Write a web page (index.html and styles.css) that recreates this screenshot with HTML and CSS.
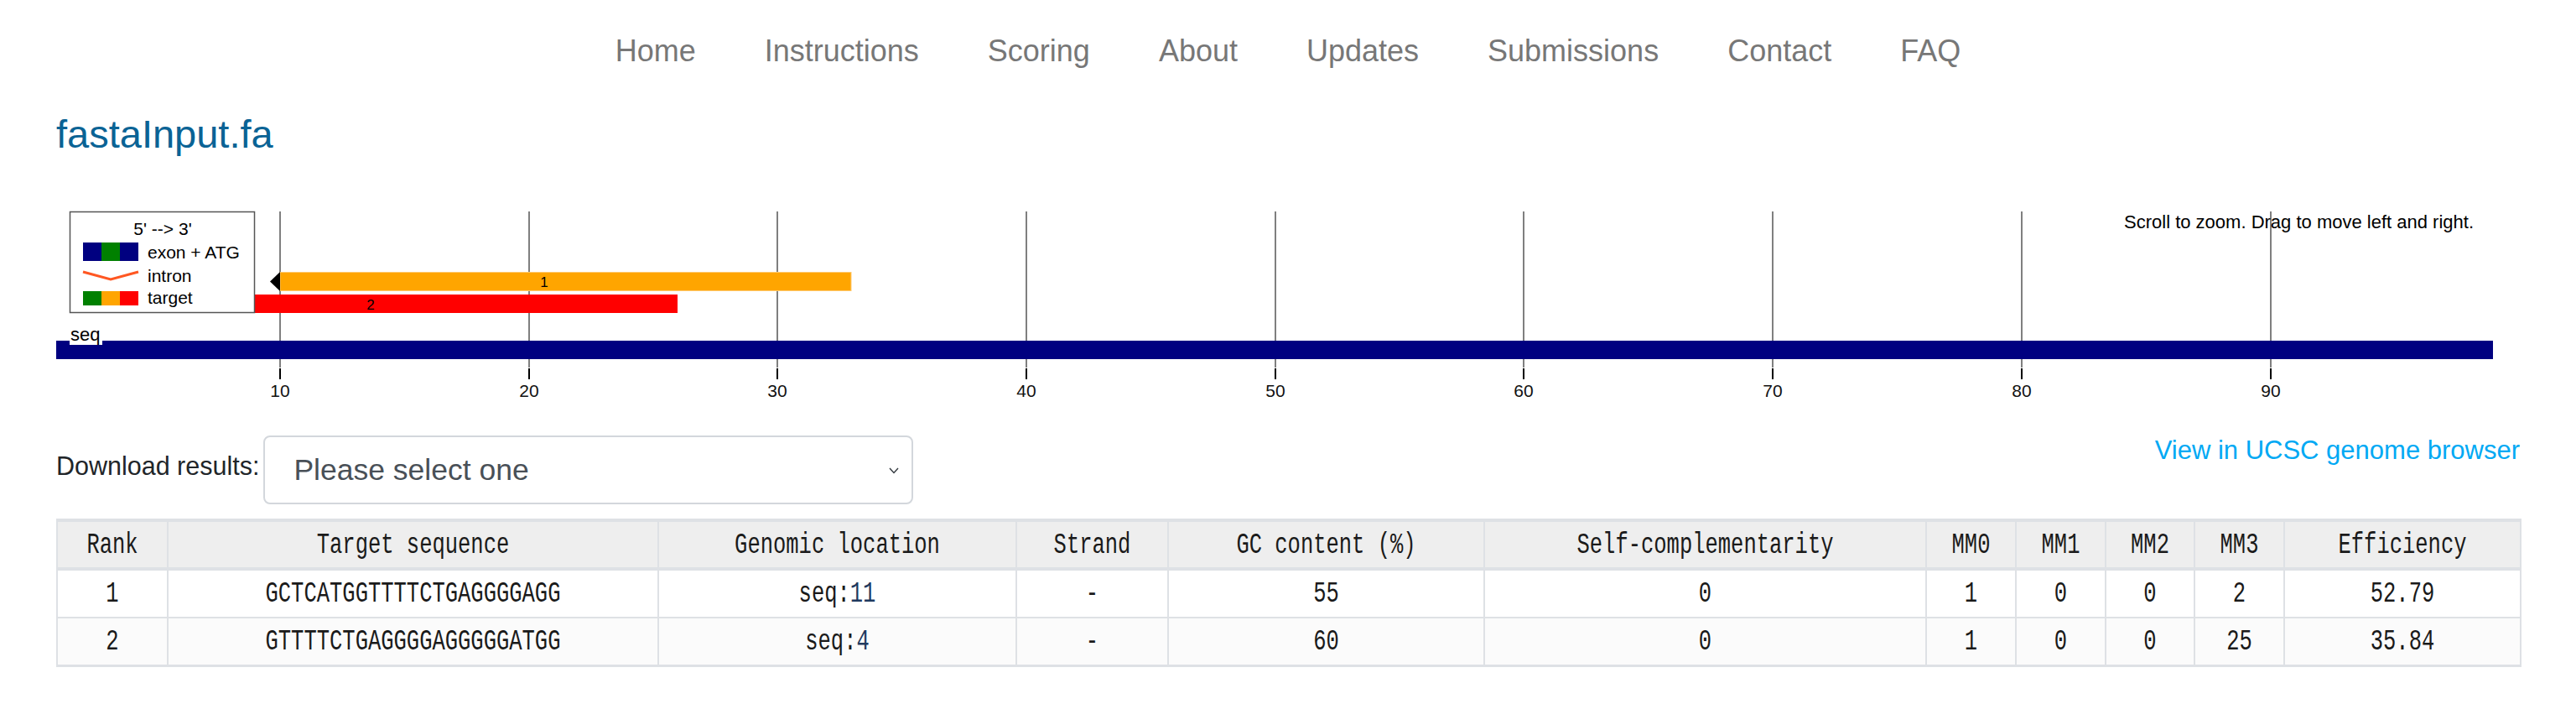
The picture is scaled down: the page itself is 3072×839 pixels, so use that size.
FILE: index.html
```html
<!DOCTYPE html>
<html lang="en">
<head>
<meta charset="utf-8">
<title>fastaInput.fa</title>
<link rel="stylesheet" href="styles.css">
</head>
<body>
<nav class="topnav">
  <ul class="nav-list">
    <li><a href="#">Home</a></li>
    <li><a href="#">Instructions</a></li>
    <li><a href="#">Scoring</a></li>
    <li><a href="#">About</a></li>
    <li><a href="#">Updates</a></li>
    <li><a href="#">Submissions</a></li>
    <li><a href="#">Contact</a></li>
    <li><a href="#">FAQ</a></li>
  </ul>
</nav>
<main class="page">
  <h1 class="file-title">fastaInput.fa</h1>

  <div class="chart">
    <svg class="chart-svg" width="2938" height="240" viewBox="67 240 2938 240" xmlns="http://www.w3.org/2000/svg">
      <g stroke="#7f7f7f" stroke-width="2">
        <line x1="334" y1="252" x2="334" y2="438"/>
        <line x1="631" y1="252" x2="631" y2="438"/>
        <line x1="927" y1="252" x2="927" y2="438"/>
        <line x1="1224" y1="252" x2="1224" y2="438"/>
        <line x1="1521" y1="252" x2="1521" y2="438"/>
        <line x1="1817" y1="252" x2="1817" y2="438"/>
        <line x1="2114" y1="252" x2="2114" y2="438"/>
        <line x1="2411" y1="252" x2="2411" y2="438"/>
        <line x1="2708" y1="252" x2="2708" y2="438"/>
      </g>
      <g stroke="#000" stroke-width="2">
        <line x1="334" y1="439" x2="334" y2="452"/>
        <line x1="631" y1="439" x2="631" y2="452"/>
        <line x1="927" y1="439" x2="927" y2="452"/>
        <line x1="1224" y1="439" x2="1224" y2="452"/>
        <line x1="1521" y1="439" x2="1521" y2="452"/>
        <line x1="1817" y1="439" x2="1817" y2="452"/>
        <line x1="2114" y1="439" x2="2114" y2="452"/>
        <line x1="2411" y1="439" x2="2411" y2="452"/>
        <line x1="2708" y1="439" x2="2708" y2="452"/>
      </g>
      <g class="axis-labels" text-anchor="middle">
        <text x="334" y="473">10</text>
        <text x="631" y="473">20</text>
        <text x="927" y="473">30</text>
        <text x="1224" y="473">40</text>
        <text x="1521" y="473">50</text>
        <text x="1817" y="473">60</text>
        <text x="2114" y="473">70</text>
        <text x="2411" y="473">80</text>
        <text x="2708" y="473">90</text>
      </g>
      <text class="hint" x="2950" y="272" text-anchor="end">Scroll to zoom. Drag to move left and right.</text>

      <rect x="334" y="324.5" width="681" height="22" fill="#ffa500" stroke="#ffc970" stroke-width="1"/>
      <polygon points="334,324 322,335.5 334,347" fill="#000"/>
      <text class="bar-label" x="649" y="342" text-anchor="middle">1</text>

      <rect x="126" y="351" width="682" height="22" fill="#ff0000"/>
      <text class="bar-label" x="442" y="369" text-anchor="middle">2</text>

      <rect x="67" y="406" width="2906" height="22" fill="#000080"/>
      <rect x="83" y="391" width="39" height="20" fill="#ffffff"/>
      <text class="seq-label" x="84" y="406">seq</text>

      <rect x="83.5" y="252.5" width="220" height="120" fill="#ffffff" stroke="#555" stroke-width="1.5"/>
      <text class="legend-text" x="194" y="280" text-anchor="middle">5' --&gt; 3'</text>
      <rect x="99" y="289" width="22" height="22" fill="#000080"/>
      <rect x="121" y="289" width="22" height="22" fill="#008000"/>
      <rect x="143" y="289" width="22" height="22" fill="#000080"/>
      <text class="legend-text" x="176" y="308">exon + ATG</text>
      <polyline points="99,324 132,333 165,324" fill="none" stroke="#ff5722" stroke-width="3"/>
      <text class="legend-text" x="176" y="336">intron</text>
      <rect x="99" y="347" width="22" height="17" fill="#008000"/>
      <rect x="121" y="347" width="22" height="17" fill="#ffa500"/>
      <rect x="143" y="347" width="22" height="17" fill="#ff0000"/>
      <text class="legend-text" x="176" y="362">target</text>
    </svg>
  </div>

  <div class="download-row">
    <div class="download">
      <label class="download-label" for="dl">Download results:</label>
      <div class="select-wrap">
        <select id="dl" class="select">
          <option>Please select one</option>
        </select>
        <svg class="chevron" width="12" height="8" viewBox="0 0 12 8" xmlns="http://www.w3.org/2000/svg">
          <polyline points="1,1 6,6.5 11,1" fill="none" stroke="#343a40" stroke-width="1.4"/>
        </svg>
      </div>
    </div>
    <a class="ucsc-link" href="#">View in UCSC genome browser</a>
  </div>

  <table class="results">
    <colgroup>
      <col class="c-rank">
      <col class="c-seq">
      <col class="c-loc">
      <col class="c-strand">
      <col class="c-gc">
      <col class="c-self">
      <col class="c-mm">
      <col class="c-mm">
      <col class="c-mm2">
      <col class="c-mm">
      <col class="c-eff">
    </colgroup>
    <thead>
      <tr>
        <th><span class="tx">Rank</span></th>
        <th><span class="tx">Target sequence</span></th>
        <th><span class="tx">Genomic location</span></th>
        <th><span class="tx">Strand</span></th>
        <th><span class="tx">GC content (%)</span></th>
        <th><span class="tx">Self-complementarity</span></th>
        <th><span class="tx">MM0</span></th>
        <th><span class="tx">MM1</span></th>
        <th><span class="tx">MM2</span></th>
        <th><span class="tx">MM3</span></th>
        <th><span class="tx">Efficiency</span></th>
      </tr>
    </thead>
    <tbody>
      <tr>
        <td><span class="tx">1</span></td>
        <td><span class="tx">GCTCATGGTTTTCTGAGGGGAGG</span></td>
        <td><span class="tx">seq:<span class="loc">11</span></span></td>
        <td><span class="tx">-</span></td>
        <td><span class="tx">55</span></td>
        <td><span class="tx">0</span></td>
        <td><span class="tx">1</span></td>
        <td><span class="tx">0</span></td>
        <td><span class="tx">0</span></td>
        <td><span class="tx">2</span></td>
        <td><span class="tx">52.79</span></td>
      </tr>
      <tr>
        <td><span class="tx">2</span></td>
        <td><span class="tx">GTTTTCTGAGGGGAGGGGGATGG</span></td>
        <td><span class="tx">seq:<span class="loc">4</span></span></td>
        <td><span class="tx">-</span></td>
        <td><span class="tx">60</span></td>
        <td><span class="tx">0</span></td>
        <td><span class="tx">1</span></td>
        <td><span class="tx">0</span></td>
        <td><span class="tx">0</span></td>
        <td><span class="tx">25</span></td>
        <td><span class="tx">35.84</span></td>
      </tr>
    </tbody>
  </table>
</main>
</body>
</html>
```

FILE: styles.css
```css
html, body {
  margin: 0;
  padding: 0;
  background: #ffffff;
}

body {
  font-family: "Liberation Sans", Arial, sans-serif;
  color: #222;
}

/* ---------- top navigation ---------- */
.topnav {
  padding-top: 40px;
}

.nav-list {
  display: flex;
  justify-content: center;
  gap: 82px;
  list-style: none;
  margin: 0;
  padding: 0;
}

.nav-list a {
  display: block;
  font-size: 36px;
  line-height: 41px;
  color: #777777;
  text-decoration: none;
}

/* ---------- page body ---------- */
.page {
  padding: 0 67px;
}

.file-title {
  margin: 52px 0 0;
  font-size: 47px;
  line-height: 54px;
  font-weight: normal;
  color: #0a6395;
}

/* ---------- chart ---------- */
.chart {
  margin-top: 53px;
  height: 240px;
}

.chart-svg {
  display: block;
  font-family: "Liberation Sans", Arial, sans-serif;
}

.axis-labels text {
  font-size: 21px;
  fill: #111;
}

.hint {
  font-size: 22px;
  fill: #000;
}

.bar-label {
  font-size: 17px;
  fill: #000;
}

.seq-label {
  font-size: 22px;
  fill: #000;
}

.legend-text {
  font-size: 21px;
  fill: #000;
}

/* ---------- download row ---------- */
.download-row {
  display: flex;
  justify-content: space-between;
  align-items: flex-start;
  margin-top: 39px;
}

.download {
  display: flex;
  align-items: flex-start;
  gap: 5px;
}

.download-label {
  margin-top: 19px;
  font-size: 30.5px;
  line-height: 35px;
  color: #212529;
}

.select-wrap {
  position: relative;
  width: 775px;
  height: 82px;
}

.select {
  display: block;
  width: 100%;
  height: 100%;
  box-sizing: border-box;
  -webkit-appearance: none;
  appearance: none;
  border: 2px solid #d3d7dc;
  border-radius: 8px;
  background: #ffffff;
  padding: 0 60px 0 34px;
  font-family: "Liberation Sans", Arial, sans-serif;
  font-size: 35.5px;
  color: #495057;
  outline: none;
}

.chevron {
  position: absolute;
  right: 17px;
  top: 38px;
}

.ucsc-link {
  font-size: 31px;
  line-height: 35px;
  color: #00a9f4;
  text-decoration: none;
}

/* ---------- results table ---------- */
.results {
  width: 100%;
  margin-top: 17px;
  border-collapse: collapse;
  table-layout: fixed;
  font-family: "Liberation Mono", "Courier New", monospace;
  font-size: 25.5px;
  color: #1a1a1a;
}

.c-rank { width: 132px; }
.c-seq { width: 585px; }
.c-loc { width: 427px; }
.c-strand { width: 181px; }
.c-gc { width: 377px; }
.c-self { width: 527px; }
.c-mm { width: 107px; }
.c-mm2 { width: 106px; }
.c-eff { width: 282px; }

.results th,
.results td {
  border: 2px solid #dee1e5;
  text-align: center;
  vertical-align: middle;
  font-weight: normal;
  padding: 0;
}

.results .tx {
  display: inline-block;
  transform: scaleY(1.4);
}

.results thead th {
  height: 54px;
  background: #eeeeee;
  border-top-width: 4px;
  border-bottom-width: 4px;
}

.results tbody td {
  height: 55px;
}

.results tbody tr:nth-child(2) td {
  background: #fbfbfb;
}

.results tbody tr:last-child td {
  border-bottom-width: 3px;
}

.loc {
  color: #1f3a5f;
}
```
